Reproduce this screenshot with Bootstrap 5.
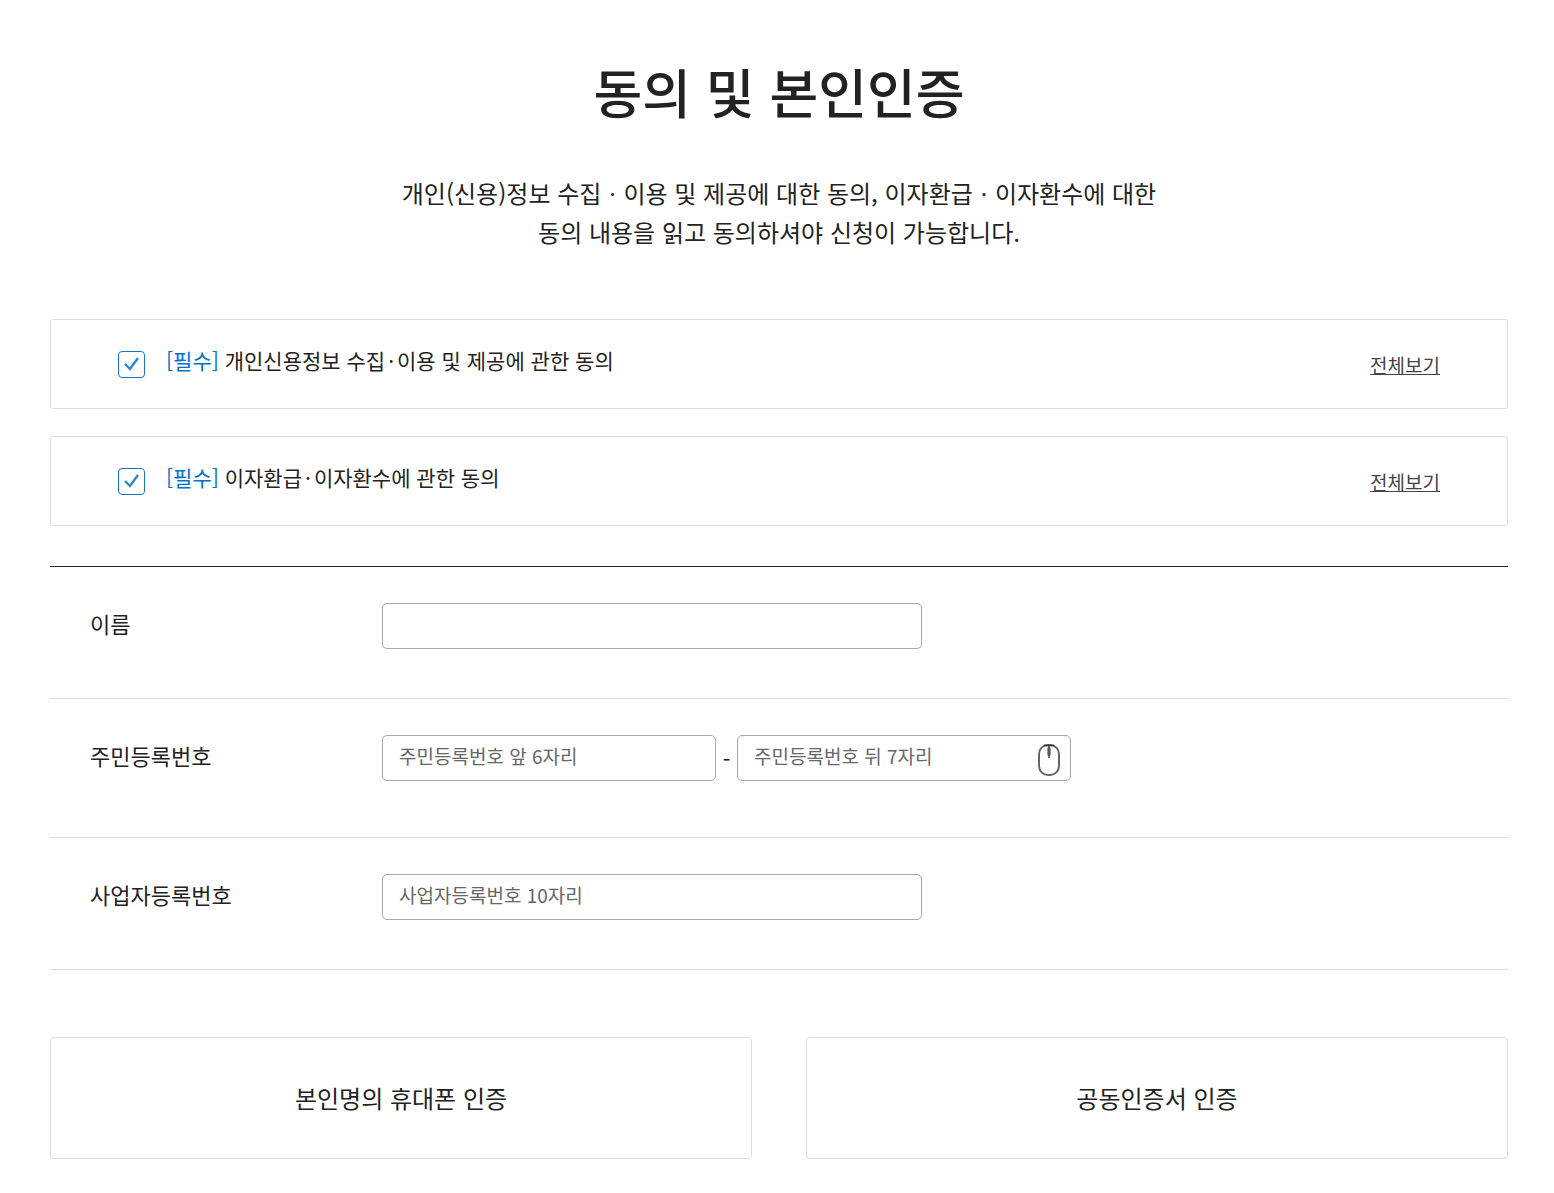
<!DOCTYPE html>
<html lang="ko">
<head>
<meta charset="utf-8">
<meta name="viewport" content="width=device-width, initial-scale=1">
<title>동의 및 본인인증</title>
<link href="https://cdn.jsdelivr.net/npm/bootstrap@5.3.0/dist/css/bootstrap.min.css" rel="stylesheet">
<style>
body { font-family: "Noto Sans CJK KR", "Noto Sans", sans-serif; color: #222; background: #fff; word-break: keep-all; }
.page { padding: 52px 46px 32px 50px; }
.page-title { font-size: 53px; line-height: 78px; font-weight: 500; margin-bottom: 43px; }
.intro { font-size: 24px; line-height: 39px; margin-bottom: 68px; }
.consent { border: 1px solid #ddd; border-radius: 3px; padding: 0 67px; height: 90px; margin-bottom: 27px; }
.consent-box.form-check-input { width: 27px; height: 27px; margin: 0 21px 0 0; border: 1px solid #0072ce; border-radius: 4px; flex: none; }
.consent-box.form-check-input:checked { background-color: #fff; border-color: #1474c4; background-size: 100% 100%; background-image: url("data:image/svg+xml,%3Csvg xmlns='http://www.w3.org/2000/svg' viewBox='0 0 25 25'%3E%3Cpath d='M6 12l5 5L19 6' fill='none' stroke='%232a86d8' stroke-width='2.400'/%3E%3C/svg%3E"); }
.consent-text { font-size: 21px; line-height: 30px; padding-bottom: 8px; }
.middot { margin: 0 3px; }
.required { color: #0072ce; }
.view-all { font-size: 19px; line-height: 28px; color: #444; padding-top: 2px; text-underline-offset: 1px; text-decoration-thickness: 1px; }
.fields { border-top: 1px solid #222; margin-top: 40px; }
.field { border-bottom: 1px solid #ddd; padding: 36px 0 49px; }
.field-tall { padding-bottom: 56px; }
.field-name { font-size: 22px; line-height: 30px; width: 332px; padding-left: 40px; padding-bottom: 6px; flex: none; }
.entry.form-control { height: 46px; font-size: 19px; line-height: 28px; padding: 6px 16px 12px; border: 1px solid #aaa; border-radius: 5px; color: #222; }
.entry.form-control::placeholder { color: #666; }
.entry-wide { max-width: 540px; }
.entry-half { max-width: 334px; flex: 1 1 334px; }
.dash { font-size: 22px; line-height: 30px; width: 21px; }
.mouse { right: 10px; top: 8px; }
.choices { margin-top: 67px; gap: 54px; }
.choice.btn { height: 122px; font-size: 24px; line-height: 36px; color: #222; border: 1px solid #ddd; border-radius: 4px; }
</style>
<script src="https://cdn.jsdelivr.net/npm/bootstrap@5.3.0/dist/js/bootstrap.bundle.min.js"></script>
</head>
<body>
<main class="page">
  <h1 class="page-title text-center">동의 및 본인인증</h1>
  <p class="intro text-center">개인(신용)정보 수집ㆍ이용 및 제공에 대한 동의, 이자환급ㆍ이자환수에 대한<br>동의 내용을 읽고 동의하셔야 신청이 가능합니다.</p>
  <form>
    <div class="consent d-flex align-items-center">
      <input class="form-check-input consent-box" type="checkbox" id="agree-info" checked>
      <label class="consent-text me-auto" for="agree-info"><span class="required">[필수]</span> 개인신용정보 수집<span class="middot">·</span>이용 및 제공에 관한 동의</label>
      <a class="view-all" href="#">전체보기</a>
    </div>
    <div class="consent d-flex align-items-center">
      <input class="form-check-input consent-box" type="checkbox" id="agree-interest" checked>
      <label class="consent-text me-auto" for="agree-interest"><span class="required">[필수]</span> 이자환급<span class="middot">·</span>이자환수에 관한 동의</label>
      <a class="view-all" href="#">전체보기</a>
    </div>
    <div class="fields">
      <div class="field d-flex align-items-center">
        <label class="field-name" for="name">이름</label>
        <input class="form-control entry entry-wide" type="text" id="name">
      </div>
      <div class="field field-tall d-flex align-items-center">
        <label class="field-name" for="rrn-front">주민등록번호</label>
        <div class="d-flex align-items-center flex-grow-1">
          <input class="form-control entry entry-half" type="text" id="rrn-front" placeholder="주민등록번호 앞 6자리">
          <span class="dash text-center">-</span>
          <div class="entry-half position-relative">
            <input class="form-control entry" type="password" id="rrn-back" aria-label="주민등록번호 뒤 7자리" placeholder="주민등록번호 뒤 7자리">
            <svg class="mouse position-absolute" width="24" height="34" viewBox="0 0 24 34" fill="none" aria-hidden="true">
              <rect x="2" y="2" width="20" height="30" rx="9" stroke="#666" stroke-width="2"/>
              <path d="M7 2.500h10" stroke="#333" stroke-width="1.500"/>
              <rect x="10" y="4" width="4" height="9" rx="2" fill="#999"/>
              <path d="M12 2v13" stroke="#444" stroke-width="1.500"/>
            </svg>
          </div>
        </div>
      </div>
      <div class="field d-flex align-items-center">
        <label class="field-name" for="biz">사업자등록번호</label>
        <input class="form-control entry entry-wide" type="text" id="biz" placeholder="사업자등록번호 10자리">
      </div>
    </div>
    <div class="choices d-flex">
      <button class="btn choice flex-fill w-50" type="button">본인명의 휴대폰 인증</button>
      <button class="btn choice flex-fill w-50" type="button">공동인증서 인증</button>
    </div>
  </form>
</main>
</body>
</html>
